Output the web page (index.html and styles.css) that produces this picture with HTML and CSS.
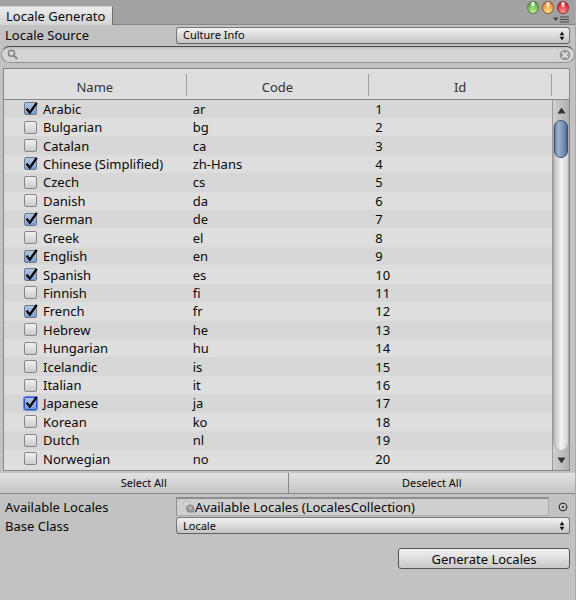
FILE: index.html
```html
<!DOCTYPE html>
<html lang="en">
<head>
<meta charset="utf-8">
<title>Locale Generator</title>
<link rel="stylesheet" href="styles.css">
</head>
<body>
<svg class="defs" aria-hidden="true">
  <symbol id="tick" viewBox="0 0 16 16"><path d="M2.6 7.6 L5.8 11.6 L12.8 1.8" fill="none" stroke="#000" stroke-width="2.3"/></symbol>
  <symbol id="updown" viewBox="0 0 8 10"><path d="M4 0.6 L6.3 4.2 H1.7Z M4 9.4 L6.3 5.8 H1.7Z" fill="#111"/></symbol>
</svg>
<main class="window">
  <header class="titlebar">
    <h1 class="tab">Locale Generato</h1>
    <div class="controls">
      <div class="lights">
        <button class="light green" aria-label="Zoom"></button>
        <button class="light orange" aria-label="Minimize"></button>
        <button class="light red" aria-label="Close"></button>
      </div>
      <button class="menu" aria-label="Menu"><svg width="17" height="7" viewBox="0 0 17 7"><path d="M1 1.5H6.5L3.7 5Z" fill="#444"/><path d="M8 1H17M8 3.5H17M8 6H17" stroke="#4a4a4a" stroke-width="1.2"/></svg></button>
    </div>
  </header>
  <div class="field source">
    <label for="source">Locale Source</label>
    <div class="picker"><select id="source"><option>Culture Info</option></select><svg class="arrows"><use href="#updown"/></svg></div>
  </div>
  <div class="search">
    <svg width="12" height="12" viewBox="0 0 12 12" fill="none" stroke="#858585"><circle cx="4.5" cy="4.3" r="3" stroke-width="1.5"/><path d="M7 6.8L10.3 10" stroke-width="2"/></svg>
    <input type="text" aria-label="Search">
    <button class="clear" aria-label="Clear"><svg width="12" height="12" viewBox="0 0 12 12"><circle cx="6" cy="6" r="5.3" fill="#999"/><path d="M3.4 3.4L8.6 8.6M8.6 3.4L3.4 8.6" stroke="#e4e4e4" stroke-width="1.8"/></svg></button>
  </div>
  <section class="list">
    <table>
      <thead><tr><th><span>Name</span></th><th><span>Code</span></th><th><span>Id</span></th><th class="gutter"></th></tr></thead>
      <tbody>
        <tr><td><label><input type="checkbox" checked><svg><use href="#tick"/></svg>Arabic</label></td><td>ar</td><td>1</td><td></td></tr>
        <tr><td><label><input type="checkbox"><svg><use href="#tick"/></svg>Bulgarian</label></td><td>bg</td><td>2</td><td></td></tr>
        <tr><td><label><input type="checkbox"><svg><use href="#tick"/></svg>Catalan</label></td><td>ca</td><td>3</td><td></td></tr>
        <tr><td><label><input type="checkbox" checked><svg><use href="#tick"/></svg>Chinese (Simplified)</label></td><td>zh-Hans</td><td>4</td><td></td></tr>
        <tr><td><label><input type="checkbox"><svg><use href="#tick"/></svg>Czech</label></td><td>cs</td><td>5</td><td></td></tr>
        <tr><td><label><input type="checkbox"><svg><use href="#tick"/></svg>Danish</label></td><td>da</td><td>6</td><td></td></tr>
        <tr><td><label><input type="checkbox" checked><svg><use href="#tick"/></svg>German</label></td><td>de</td><td>7</td><td></td></tr>
        <tr><td><label><input type="checkbox"><svg><use href="#tick"/></svg>Greek</label></td><td>el</td><td>8</td><td></td></tr>
        <tr><td><label><input type="checkbox" checked><svg><use href="#tick"/></svg>English</label></td><td>en</td><td>9</td><td></td></tr>
        <tr><td><label><input type="checkbox" checked><svg><use href="#tick"/></svg>Spanish</label></td><td>es</td><td>10</td><td></td></tr>
        <tr><td><label><input type="checkbox"><svg><use href="#tick"/></svg>Finnish</label></td><td>fi</td><td>11</td><td></td></tr>
        <tr><td><label><input type="checkbox" checked><svg><use href="#tick"/></svg>French</label></td><td>fr</td><td>12</td><td></td></tr>
        <tr><td><label><input type="checkbox"><svg><use href="#tick"/></svg>Hebrew</label></td><td>he</td><td>13</td><td></td></tr>
        <tr><td><label><input type="checkbox"><svg><use href="#tick"/></svg>Hungarian</label></td><td>hu</td><td>14</td><td></td></tr>
        <tr><td><label><input type="checkbox"><svg><use href="#tick"/></svg>Icelandic</label></td><td>is</td><td>15</td><td></td></tr>
        <tr><td><label><input type="checkbox"><svg><use href="#tick"/></svg>Italian</label></td><td>it</td><td>16</td><td></td></tr>
        <tr><td><label><input type="checkbox" class="focused" checked><svg><use href="#tick"/></svg>Japanese</label></td><td>ja</td><td>17</td><td></td></tr>
        <tr><td><label><input type="checkbox"><svg><use href="#tick"/></svg>Korean</label></td><td>ko</td><td>18</td><td></td></tr>
        <tr><td><label><input type="checkbox"><svg><use href="#tick"/></svg>Dutch</label></td><td>nl</td><td>19</td><td></td></tr>
        <tr><td><label><input type="checkbox"><svg><use href="#tick"/></svg>Norwegian</label></td><td>no</td><td>20</td><td></td></tr>
      </tbody>
    </table>
    <div class="scrollbar">
      <button aria-label="Scroll up"><svg width="9" height="7" viewBox="0 0 9 7"><path d="M4.5 0.5L8.5 6.5H0.5Z" fill="#333"/></svg></button>
      <div class="track"><div class="thumb"></div></div>
      <button aria-label="Scroll down"><svg width="9" height="7" viewBox="0 0 9 7"><path d="M4.5 6.5L8.5 0.5H0.5Z" fill="#333"/></svg></button>
    </div>
  </section>
  <div class="actions"><button>Select All</button><button>Deselect All</button></div>
  <div class="field">
    <label for="locales">Available Locales</label>
    <div class="object">
      <div class="well">
        <svg width="13" height="14" viewBox="0 0 13 14"><circle cx="4" cy="4" r="3.8" fill="#c3c6c8"/><path d="M2.5 5.5L4 2L5.5 5.5" fill="none" stroke="#e8e8e8"/><circle cx="8.2" cy="8.6" r="4.2" fill="#8f8f8f"/><path d="M9 10.4L12.4 13.4V9Z" fill="#8f8f8f"/><path d="M6.2 7.1H10.2M8.2 7.1V10.4M6.8 8.8H9.6" fill="none" stroke="#c4c4c4"/></svg>
        <input id="locales" type="text" value="Available Locales (LocalesCollection)" readonly>
      </div>
      <button class="pick" aria-label="Select object"><svg width="10" height="10" viewBox="0 0 10 10"><circle cx="5" cy="5" r="3.8" fill="none" stroke="#222" stroke-width="1.1"/><circle cx="5" cy="5" r="1" fill="#222"/></svg></button>
    </div>
  </div>
  <div class="field">
    <label for="base">Base Class</label>
    <div class="picker"><select id="base"><option>Locale</option></select><svg class="arrows"><use href="#updown"/></svg></div>
  </div>
  <footer><button class="generate">Generate Locales</button></footer>
</main>
</body>
</html>
```
FILE: styles.css
```css
* { box-sizing: border-box; }
body {
  margin: 0;
  background: #c2c2c2;
  color: #080808;
  font: 13px/18px "Noto Sans", "Open Sans", sans-serif;
}
button, input, select { font: inherit; color: inherit; margin: 0; padding: 0; border: 0; background: none; }
svg { display: block; flex: none; }
.defs { position: absolute; width: 0; height: 0; }
.window { min-height: 100vh; border-right: 1px solid #aaa; }

.titlebar {
  display: flex;
  justify-content: space-between;
  align-items: flex-end;
  height: 25px;
  background: #a2a2a2;
  border-bottom: 1px solid #868686;
}
.tab {
  margin: 0 0 -1px;
  padding: 0 7px 0 6px;
  height: 19px;
  font-size: 13px;
  font-weight: normal;
  line-height: 18px;
  background: linear-gradient(#ececec, #d4d4d4);
  border-top: 1px solid #d8d8d8;
  border-right: 1px solid #707070;
}
.controls { display: flex; flex-direction: column; align-items: flex-end; gap: 2px; padding-bottom: 1px; }
.lights { display: flex; gap: 3px; padding-right: 6px; }
.light { width: 12px; height: 13px; border-radius: 50%; border: 1px solid; }
.green { border-color: #557f48; background: radial-gradient(ellipse at 50% 15%, #f2ffe9 0 12%, transparent 35%), radial-gradient(circle at 50% 90%, #c1f08c, #64b64a 65%, #407931); }
.orange { border-color: #99572f; background: radial-gradient(ellipse at 50% 15%, #fff3df 0 12%, transparent 35%), radial-gradient(circle at 50% 90%, #ffed88, #ee963c 65%, #a94c1c); }
.red { border-color: #972c34; background: radial-gradient(ellipse at 50% 15%, #fff0f0 0 12%, transparent 35%), radial-gradient(circle at 50% 90%, #ff9c92, #e32d3b 65%, #a41724); }
.menu { padding-right: 6px; }

.field { display: grid; grid-template-columns: 171px 1fr; align-items: center; padding: 0 5px; height: 19px; }
.source { height: 20px; }
.picker { position: relative; }
.picker select {
  display: block;
  width: 100%;
  height: 17px;
  padding: 0 6px;
  appearance: none;
  font-size: 11px;
  line-height: 14px;
  border: 1px solid #777;
  border-bottom-color: #606060;
  border-radius: 3px;
  background: linear-gradient(#f2f2f2, #c4c4c4);
}
.arrows { position: absolute; right: 4px; top: 4px; width: 8px; height: 10px; pointer-events: none; }

.search {
  display: flex;
  align-items: center;
  gap: 4px;
  height: 17px;
  margin: 1px 0 5px 1px;
  padding: 0 3px 0 5px;
  border: 1px solid #929292;
  border-top: 1px solid #4c4c4c;
  border-radius: 9px;
  background: linear-gradient(#bcbcbc, #d4d4d4 3px);
}
.search input { flex: 1; min-width: 0; height: 14px; outline: 0; }

.list { position: relative; margin: 0 5px 0 3px; padding-bottom: 2px; border: 1px solid #888; background: #dedede; }
table { width: 100%; height: 399px; table-layout: fixed; border-collapse: collapse; }
th { height: 30px; padding: 5px 0 2px; font-weight: normal; color: #333; border-bottom: 1px solid #888; }
th span { display: block; padding-top: 4px; line-height: 18px; border-right: 1px solid #a0a0a0; }
.gutter { width: 17px; }
tbody tr:nth-child(odd) { background: #d7d7d7; }
td { padding: 0 0 0 6px; line-height: 18px; }
td:first-child { padding-left: 20px; }
td label { display: grid; grid-template-columns: 13px 1fr; column-gap: 6px; align-items: center; }
td label svg { grid-area: 1 / 1; width: 16px; height: 16px; visibility: hidden; pointer-events: none; }
td input {
  grid-area: 1 / 1;
  appearance: none;
  width: 13px;
  height: 13px;
  border: 1px solid #858585;
  border-radius: 2px;
  background: linear-gradient(#f0f0f0, #cccccc);
}
td input:checked { border-color: #6f7785; background: linear-gradient(#b0c6e0, #7b9fd1); }
td input:checked + svg { visibility: visible; }
td input.focused { border-color: #2851d5; box-shadow: 0 0 0 1px #668be0; }

.scrollbar {
  position: absolute;
  top: 31px;
  right: 0;
  bottom: 0;
  width: 17px;
  display: flex;
  flex-direction: column;
  border-left: 1px solid #999;
  background: linear-gradient(90deg, #d0d0d0, #b0b0b0);
}
.scrollbar button { display: grid; place-items: center; height: 20px; }
.track { flex: 1; border: 1px solid #aaa; border-width: 0 1px; border-radius: 8px; background: linear-gradient(90deg, #bdbdbd, #f3f3f3 50%, #d2d2d2); }
.thumb { height: 38px; border: 1px solid #344f78; border-radius: 7px; background: linear-gradient(90deg, #7187a7, #a0b0c8 30%, #6885ae 80%, #49668f); }

.actions { display: grid; grid-template-columns: 1fr 1fr; height: 21px; margin: 2px 0 3px; border-bottom: 1px solid #888; background: linear-gradient(#e2e2e2, #c5c5c5); }
.actions button { font-size: 11px; line-height: 20px; }
.actions button + button { border-left: 1px solid #888; }

.object { display: flex; align-items: center; gap: 9px; padding-right: 2px; }
.well { flex: 1; display: flex; align-items: center; height: 19px; padding-left: 5px; border: 1px solid #aaa; border-top: 2px solid #8e8e8e; border-left-color: #8e8e8e; background: #cfcfcf; }
.well input { flex: 1; min-width: 0; height: 16px; line-height: 16px; }

footer { display: flex; justify-content: flex-end; padding: 13px 5px; }
.generate { width: 172px; height: 21px; line-height: 18px; border: 1px solid #555; border-radius: 3px; background: linear-gradient(#f2f2f2, #c8c8c8); }
```
